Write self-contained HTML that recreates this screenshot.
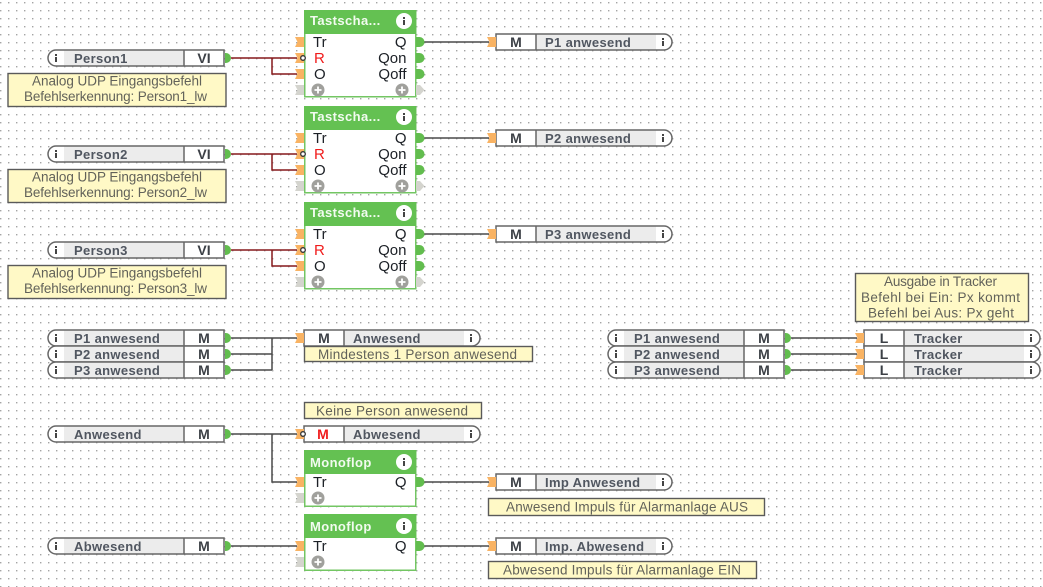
<!DOCTYPE html>
<html><head><meta charset="utf-8"><style>
html,body{margin:0;padding:0;background:#fff;width:1043px;height:587px;overflow:hidden}
svg{display:block;filter:blur(.3px)}
text{font-family:"Liberation Sans",sans-serif}
.n{font-size:13px;font-weight:bold;fill:#505660;letter-spacing:.35px}
.v{font-size:14px;font-weight:bold;fill:#3c4046;text-anchor:middle}
.p{font-size:15px;fill:#1c2026}
.q{font-size:15px;fill:#1c2026;text-anchor:end}
.h{font-size:13px;font-weight:bold;fill:#f2fbf0;letter-spacing:.4px}
.c{font-size:13.5px;fill:#62625a}
.w{fill:none;stroke:#4a4a4a;stroke-width:1.5}
.r{fill:none;stroke:#85191c;stroke-width:1.5}
.b{fill:#fff9c6;stroke:#5a5a5a;stroke-width:1.4}
</style></head><body>
<svg width="1043" height="587" viewBox="0 0 1043 587" xmlns="http://www.w3.org/2000/svg">
<defs>
<pattern id="d" width="8" height="8" patternUnits="userSpaceOnUse"><rect x="0" y="2" width="1.4" height="1.4" fill="#a4a4a4"/></pattern>
<g id="ii"><rect x="-1" y="-4" width="2" height="2" fill="#444"/><rect x="-1" y="-1" width="2" height="5" fill="#444"/></g>
<g id="inb"><path d="M8,0H176V16H8A8,8 0 0 1 8,0Z" fill="#fff"/><rect x="16" y="0" width="120" height="16" fill="#ececec"/><path d="M8,0H176V16H8A8,8 0 0 1 8,0ZM136,0V16" fill="none" stroke="#666" stroke-width="1.500"/><use href="#ii" x="8" y="8"/><path d="M177,3H178A5,5 0 0 1 178,13H177Z" fill="#62bd4e"/></g>
<g id="outb"><path d="M0,0H168A8,8 0 0 1 168,16H0Z" fill="#fff"/><rect x="40" y="0" width="120" height="16" fill="#ececec"/><path d="M0,0H168A8,8 0 0 1 168,16H0ZM40,0V16" fill="none" stroke="#666" stroke-width="1.500"/><use href="#ii" x="167" y="8"/><path d="M-9,3H0V13H-9L-6.500,8Z" fill="#f9b363"/></g>
<path id="pi" d="M-1,-5H8V5H-1L1.500,0Z" fill="#f9b363"/>
<path id="pg" d="M-1,-5H8V5H-1L1.500,0Z" fill="#d4d4ce"/>
<path id="po" d="M0,-5H3.500A5,5 0 0 1 3.500,5H0Z" fill="#62bd4e"/>
<path id="poo" d="M0,-5H4L8.500,0L4,5H0Z" fill="#d4d4ce"/>
<g id="plus"><circle r="6.500" fill="#a0a09c"/><path d="M-3.500,0H3.500M0,-3.500V3.500" stroke="#fff" stroke-width="1.800"/></g>
<g id="inv"><circle r="2.300" fill="#fff" stroke="#333" stroke-width="1.300"/></g>
<g id="ts">
<rect x=".75" y=".75" width="111" height="86" fill="#fff" stroke="#73c663" stroke-width="1.500"/>
<rect x="0" y="0" width="112" height="24" fill="#64c152"/>
<circle cx="100" cy="11" r="8" fill="#fff"/><use href="#ii" x="100" y="11"/>
<use href="#pi" x="-8" y="32"/><use href="#pi" x="-8" y="48"/><use href="#pi" x="-8" y="64"/><use href="#pg" x="-8" y="80"/>
<use href="#po" x="112" y="32"/><use href="#po" x="112" y="48"/><use href="#po" x="112" y="64"/><use href="#poo" x="112" y="80"/>
<use href="#plus" x="14" y="80"/><use href="#plus" x="98" y="80"/>
</g>
<g id="mf">
<rect x=".75" y=".75" width="111" height="55.500" fill="#fff" stroke="#73c663" stroke-width="1.500"/>
<rect x="0" y="0" width="112" height="24" fill="#64c152"/>
<circle cx="100" cy="12" r="8" fill="#fff"/><use href="#ii" x="100" y="12"/>
<use href="#pi" x="-8" y="32"/><use href="#pg" x="-8" y="48"/>
<use href="#po" x="112" y="32"/>
<use href="#plus" x="14" y="48"/>
</g>
</defs>
<rect width="1043" height="587" fill="#fff"/>
<rect width="1043" height="587" fill="url(#d)"/>

<!-- wires -->
<path class="r" d="M231,58H297M272,58V74H297M231,154H297M272,154V170H297M231,250H297M272,250V266H297"/>
<path class="w" d="M424,42H489M424,138H489M424,234H489"/>
<path class="w" d="M231,338H297M231,354H272M231,370H272M272,338V370"/>
<path class="w" d="M791,338H857M791,354H857M791,370H857"/>
<path class="w" d="M231,434H297M272,434V482H297M424,482H489M231,546H297M424,546H489"/>

<!-- Tastschalter blocks -->
<use href="#ts" x="304" y="10"/>
<text class="h" x="310" y="25">Tastscha...</text>
<text class="p" x="313" y="47">Tr</text><text class="p" x="314" y="63" style="fill:#f01c1c">R</text><text class="p" x="314" y="79">O</text>
<text class="q" x="406.500" y="47">Q</text><text class="q" x="406.500" y="63">Qon</text><text class="q" x="406.500" y="79">Qoff</text>
<use href="#inv" x="303" y="58"/>

<use href="#ts" x="304" y="106"/>
<text class="h" x="310" y="121">Tastscha...</text>
<text class="p" x="313" y="143">Tr</text><text class="p" x="314" y="159" style="fill:#f01c1c">R</text><text class="p" x="314" y="175">O</text>
<text class="q" x="406.500" y="143">Q</text><text class="q" x="406.500" y="159">Qon</text><text class="q" x="406.500" y="175">Qoff</text>
<use href="#inv" x="303" y="154"/>

<use href="#ts" x="304" y="202"/>
<text class="h" x="310" y="217">Tastscha...</text>
<text class="p" x="313" y="239">Tr</text><text class="p" x="314" y="255" style="fill:#f01c1c">R</text><text class="p" x="314" y="271">O</text>
<text class="q" x="406.500" y="239">Q</text><text class="q" x="406.500" y="255">Qon</text><text class="q" x="406.500" y="271">Qoff</text>
<use href="#inv" x="303" y="250"/>

<!-- Person inputs -->
<use href="#inb" x="48" y="50"/><text class="n" x="74" y="63">Person1</text><text class="v" x="204" y="63">VI</text>
<use href="#inb" x="48" y="146"/><text class="n" x="74" y="159">Person2</text><text class="v" x="204" y="159">VI</text>
<use href="#inb" x="48" y="242"/><text class="n" x="74" y="255">Person3</text><text class="v" x="204" y="255">VI</text>

<!-- comments -->
<rect class="b" x="8" y="73.500" width="218" height="33"/>
<text class="c" x="32" y="85.500" textLength="170">Analog UDP Eingangsbefehl</text><text class="c" x="24" y="101" textLength="183">Befehlserkennung: Person1_lw</text>
<rect class="b" x="8" y="169.500" width="218" height="33"/>
<text class="c" x="32" y="181.500" textLength="170">Analog UDP Eingangsbefehl</text><text class="c" x="24" y="197" textLength="183">Befehlserkennung: Person2_lw</text>
<rect class="b" x="8" y="265.500" width="218" height="33"/>
<text class="c" x="32" y="277.500" textLength="170">Analog UDP Eingangsbefehl</text><text class="c" x="24" y="293" textLength="183">Befehlserkennung: Person3_lw</text>

<!-- P outputs -->
<use href="#outb" x="496" y="34"/><text class="v" x="516" y="47">M</text><text class="n" x="545" y="47">P1 anwesend</text>
<use href="#outb" x="496" y="130"/><text class="v" x="516" y="143">M</text><text class="n" x="545" y="143">P2 anwesend</text>
<use href="#outb" x="496" y="226"/><text class="v" x="516" y="239">M</text><text class="n" x="545" y="239">P3 anwesend</text>

<!-- middle left group -->
<use href="#inb" x="48" y="330"/><text class="n" x="74" y="343">P1 anwesend</text><text class="v" x="204" y="343">M</text>
<use href="#inb" x="48" y="346"/><text class="n" x="74" y="359">P2 anwesend</text><text class="v" x="204" y="359">M</text>
<use href="#inb" x="48" y="362"/><text class="n" x="74" y="375">P3 anwesend</text><text class="v" x="204" y="375">M</text>
<use href="#outb" x="304" y="330"/><text class="v" x="324" y="343">M</text><text class="n" x="353" y="343">Anwesend</text>
<rect class="b" x="304.500" y="346.500" width="228" height="15"/>
<text class="c" x="318" y="359" textLength="199">Mindestens 1 Person anwesend</text>

<!-- right group -->
<rect class="b" x="855.500" y="273.500" width="173" height="48"/>
<text class="c" x="884" y="286" textLength="113">Ausgabe in Tracker</text><text class="c" x="861" y="302" textLength="159">Befehl bei Ein: Px kommt</text><text class="c" x="868" y="317.500" textLength="146">Befehl bei Aus: Px geht</text>
<use href="#inb" x="608" y="330"/><text class="n" x="634" y="343">P1 anwesend</text><text class="v" x="764" y="343">M</text>
<use href="#inb" x="608" y="346"/><text class="n" x="634" y="359">P2 anwesend</text><text class="v" x="764" y="359">M</text>
<use href="#inb" x="608" y="362"/><text class="n" x="634" y="375">P3 anwesend</text><text class="v" x="764" y="375">M</text>
<use href="#outb" x="864" y="330"/><text class="v" x="884" y="343">L</text><text class="n" x="914" y="343">Tracker</text>
<use href="#outb" x="864" y="346"/><text class="v" x="884" y="359">L</text><text class="n" x="914" y="359">Tracker</text>
<use href="#outb" x="864" y="362"/><text class="v" x="884" y="375">L</text><text class="n" x="914" y="375">Tracker</text>

<!-- bottom -->
<rect class="b" x="304.500" y="402.500" width="177" height="16"/>
<text class="c" x="316" y="415.500" textLength="152">Keine Person anwesend</text>
<use href="#inb" x="48" y="426"/><text class="n" x="74" y="439">Anwesend</text><text class="v" x="204" y="439">M</text>
<use href="#outb" x="304" y="426"/><text class="v" x="323" y="439" style="fill:#f01c1c">M</text><text class="n" x="353" y="439">Abwesend</text>
<use href="#inv" x="303" y="434"/>

<use href="#mf" x="304" y="450"/>
<text class="h" x="310" y="467">Monoflop</text>
<text class="p" x="313" y="487">Tr</text><text class="q" x="406.500" y="487">Q</text>
<use href="#outb" x="496" y="474"/><text class="v" x="516" y="487">M</text><text class="n" x="545" y="487">Imp Anwesend</text>
<rect class="b" x="488.500" y="498.500" width="276" height="17"/>
<text class="c" x="506" y="511.500" textLength="242">Anwesend Impuls für Alarmanlage AUS</text>

<use href="#mf" x="304" y="514"/>
<text class="h" x="310" y="531">Monoflop</text>
<text class="p" x="313" y="551">Tr</text><text class="q" x="406.500" y="551">Q</text>
<use href="#inb" x="48" y="538"/><text class="n" x="74" y="551">Abwesend</text><text class="v" x="204" y="551">M</text>
<use href="#outb" x="496" y="538"/><text class="v" x="516" y="551">M</text><text class="n" x="545" y="551">Imp. Abwesend</text>
<rect class="b" x="488.500" y="561.500" width="268" height="17"/>
<text class="c" x="503" y="574.500" textLength="238">Abwesend Impuls für Alarmanlage EIN</text>
</svg>
</body></html>
